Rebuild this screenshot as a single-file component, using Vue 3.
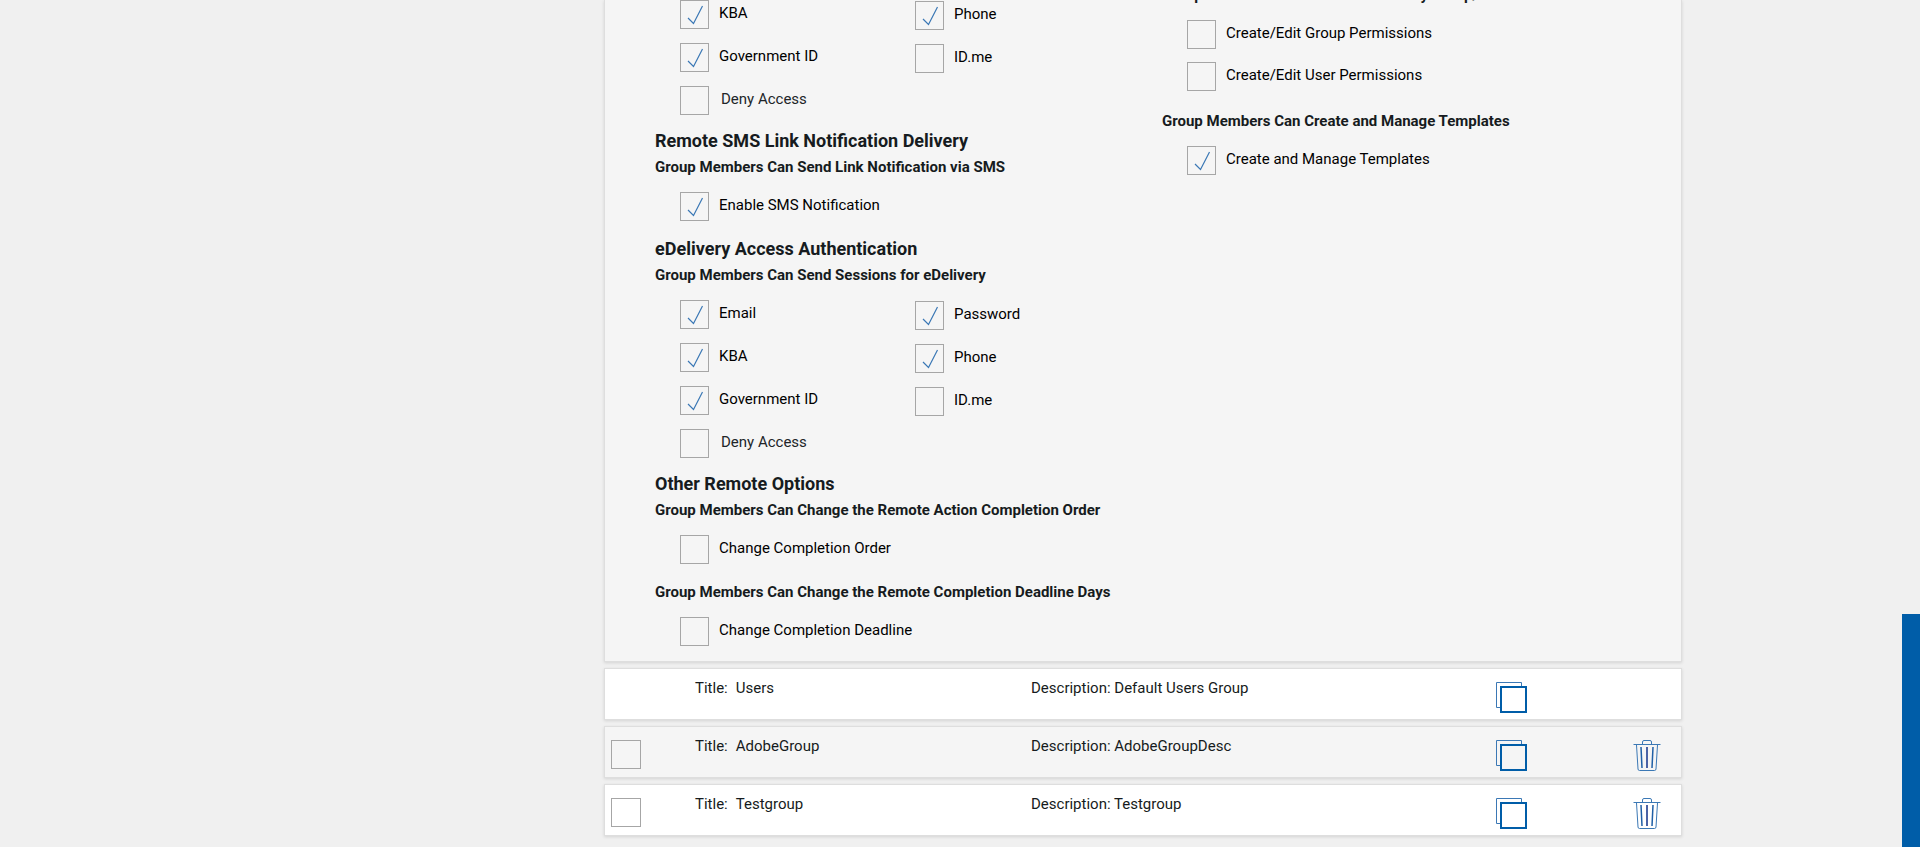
<template>
  <div class="page">
    <main class="content">
      <section class="panel">
        <div class="remote">
          <div class="options columns">
            <div v-for="(column, index) in signing" :key="index" class="column">
              <label v-for="item in column" :key="item.label" :class="['option', { muted: item.muted }]">
                <input v-model="item.checked" type="checkbox">
                <span>{{ item.label }}</span>
              </label>
            </div>
          </div>

          <h2>Remote SMS Link Notification Delivery</h2>
          <h3>Group Members Can Send Link Notification via SMS</h3>
          <div class="options single">
            <label class="option">
              <input v-model="smsEnabled" type="checkbox">
              <span>Enable SMS Notification</span>
            </label>
          </div>

          <h2>eDelivery Access Authentication</h2>
          <h3>Group Members Can Send Sessions for eDelivery</h3>
          <div class="options columns">
            <div v-for="(column, index) in delivery" :key="index" class="column">
              <label v-for="item in column" :key="item.label" :class="['option', { muted: item.muted }]">
                <input v-model="item.checked" type="checkbox">
                <span>{{ item.label }}</span>
              </label>
            </div>
          </div>

          <h2>Other Remote Options</h2>
          <h3>Group Members Can Change the Remote Action Completion Order</h3>
          <div class="options single">
            <label class="option">
              <input v-model="changeOrder" type="checkbox">
              <span>Change Completion Order</span>
            </label>
          </div>
          <h3>Group Members Can Change the Remote Completion Deadline Days</h3>
          <div class="options single">
            <label class="option">
              <input v-model="changeDeadline" type="checkbox">
              <span>Change Completion Deadline</span>
            </label>
          </div>
        </div>

        <div class="permissions">
          <h3>Group Members Can Create and Modify Group/User Permissions</h3>
          <div class="options">
            <label v-for="item in permissions" :key="item.label" class="option">
              <input v-model="item.checked" type="checkbox">
              <span>{{ item.label }}</span>
            </label>
          </div>
          <h3>Group Members Can Create and Manage Templates</h3>
          <div class="options">
            <label class="option">
              <input v-model="manageTemplates" type="checkbox">
              <span>Create and Manage Templates</span>
            </label>
          </div>
        </div>
      </section>

      <ul class="groups">
        <li v-for="group in groups" :key="group.title" class="group">
          <div class="select">
            <input v-if="group.removable" v-model="group.selected" type="checkbox" :aria-label="group.title">
          </div>
          <div class="title"><span>Title:</span><span>{{ group.title }}</span></div>
          <div class="description">Description: {{ group.description }}</div>
          <div class="copy">
            <button type="button" aria-label="Copy">
              <svg width="31" height="31" viewBox="0 0 31 31" fill="none">
                <path d="M4 25.5H.5V.5h25V4" stroke="#3b78b5" />
                <path d="M5 5h25v25H5z" stroke="#005da8" stroke-width="2" />
              </svg>
            </button>
          </div>
          <div class="remove">
            <button v-if="group.removable" type="button" aria-label="Delete">
              <svg width="28" height="31" viewBox="0 0 28 31" fill="none" stroke="#3b78b5">
                <path d="M.5 4.5h27M9.5 4V2Q9.500 .5 11 .5h6Q18.500 .5 18.500 2v2" />
                <path d="M3.500 5l1.500 24q.1 1.500 1.500 1.500h15q1.400 0 1.500-1.500L24.500 5" />
                <path d="M8 7l1 21M20 7l-1 21" stroke="#1f5fa6" stroke-width="1.500" />
                <path d="M14 7v21" stroke="#4a62a5" stroke-width="2" />
              </svg>
            </button>
          </div>
        </li>
      </ul>
    </main>
    <div class="side-tab"></div>
  </div>
</template>

<script setup>
import { ref } from 'vue'

const signing = ref([
  [
    { label: 'KBA', checked: true },
    { label: 'Government ID', checked: true },
    { label: 'Deny Access', checked: false, muted: true }
  ],
  [
    { label: 'Phone', checked: true },
    { label: 'ID.me', checked: false }
  ]
])

const delivery = ref([
  [
    { label: 'Email', checked: true },
    { label: 'KBA', checked: true },
    { label: 'Government ID', checked: true },
    { label: 'Deny Access', checked: false, muted: true }
  ],
  [
    { label: 'Password', checked: true },
    { label: 'Phone', checked: true },
    { label: 'ID.me', checked: false }
  ]
])

const permissions = ref([
  { label: 'Create/Edit Group Permissions', checked: false },
  { label: 'Create/Edit User Permissions', checked: false }
])

const smsEnabled = ref(true)
const changeOrder = ref(false)
const changeDeadline = ref(false)
const manageTemplates = ref(true)

const groups = ref([
  { title: 'Users', description: 'Default Users Group', removable: false, selected: false },
  { title: 'AdobeGroup', description: 'AdobeGroupDesc', removable: true, selected: false },
  { title: 'Testgroup', description: 'Testgroup', removable: true, selected: false }
])
</script>

<style>
body {
  margin: 0;
  background: #f0f0f0;
}
</style>

<style scoped>
.page {
  min-height: 100vh;
  box-sizing: border-box;
  padding: 0 238px 0 604px;
  overflow: hidden;
  background: #f0f0f0;
  color: #161b20;
  font-family: Roboto, sans-serif;
  font-size: 15px;
  line-height: 24px;
}

.panel {
  display: grid;
  grid-template-columns: 507px 1fr;
  padding-left: 50px;
  background: #f5f5f5;
  border: 1px solid #dedede;
  border-top: 0;
  box-shadow: 0 1px 3px rgba(0, 0, 0, 0.12);
}

h2,
h3 {
  margin: 0;
  font-weight: 700;
  line-height: 24px;
  white-space: nowrap;
}

h2 {
  margin-bottom: 2px;
  font-size: 18px;
}

h3 {
  margin-bottom: 13px;
  font-size: 15px;
}

input {
  appearance: none;
  flex: none;
  box-sizing: border-box;
  width: 29px;
  height: 29px;
  margin: 0;
  border: 1px solid #a6a6a6;
  border-radius: 0;
  cursor: pointer;
}

input:checked {
  background: url("data:image/svg+xml,%3Csvg xmlns='http://www.w3.org/2000/svg' width='27' height='27' fill='none' stroke='%233b78b5' stroke-width='1.2'%3E%3Cpath d='M7 17l5.500 5.500L21.500 5'/%3E%3C/svg%3E") no-repeat;
}

.options {
  display: flex;
  flex-direction: column;
  gap: 13px;
  padding-left: 25px;
}

.columns {
  flex-direction: row;
  gap: 0;
  margin-bottom: 14px;
}

.single {
  margin-bottom: 16px;
}

.single:last-child {
  margin-bottom: 15px;
}

.column {
  display: flex;
  flex-direction: column;
  gap: 14px;
  width: 235px;
}

.column + .column {
  padding-top: 1px;
}

.option {
  display: flex;
  align-items: flex-start;
  gap: 10px;
  color: #000;
  line-height: 26px;
  cursor: pointer;
}

.muted {
  gap: 12px;
  color: #212529;
}

.permissions {
  margin-top: -17px;
}

.permissions .options {
  margin-bottom: 18px;
}

.groups {
  margin: 0;
  padding: 0;
  list-style: none;
}

.group {
  display: grid;
  grid-template-columns: 90px 336px 465px 137px 1fr;
  box-sizing: border-box;
  height: 52px;
  margin-top: 6px;
  background: #fff;
  border: 1px solid #dedede;
  box-shadow: 0 1px 3px rgba(0, 0, 0, 0.12);
}

.group:nth-child(even) {
  background: #f5f5f5;
}

.select {
  padding: 13px 0 0 6px;
}

.select input {
  display: block;
  width: 30px;
}

.title,
.description {
  padding-top: 7px;
}

.title {
  display: flex;
  gap: 8px;
}

.copy,
.remove {
  padding-top: 13px;
}

button {
  display: block;
  padding: 0;
  border: 0;
  background: none;
  cursor: pointer;
}

svg {
  display: block;
}

.side-tab {
  position: fixed;
  right: 0;
  bottom: 0;
  width: 18px;
  height: 233px;
  background: #005da8;
}
</style>
